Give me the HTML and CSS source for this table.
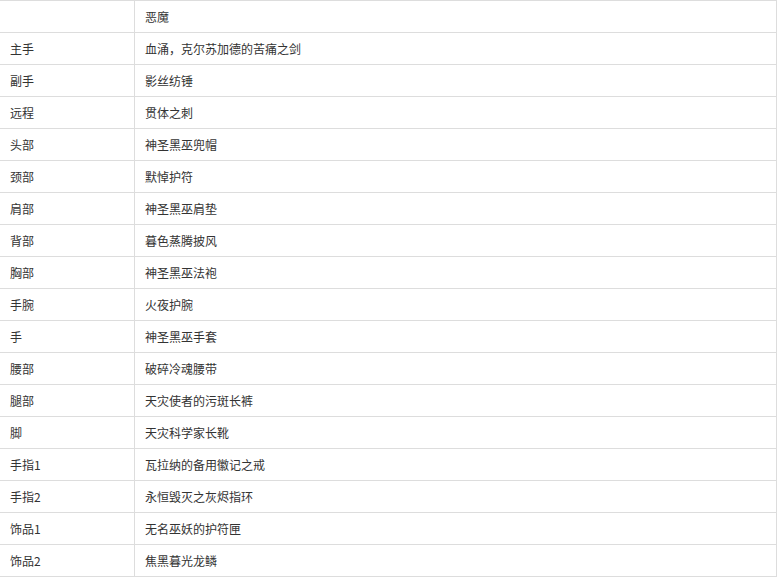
FILE: index.html
```html
<!DOCTYPE html>
<html lang="zh">
<head>
<meta charset="utf-8">
<link rel="stylesheet" href="styles.css">
</head>
<body>
<table class="gear">
<tbody>
<tr><td class="slot"></td><td class="item">恶魔</td></tr>
<tr><td class="slot">主手</td><td class="item">血涌，克尔苏加德的苦痛之剑</td></tr>
<tr><td class="slot">副手</td><td class="item">影丝纺锤</td></tr>
<tr><td class="slot">远程</td><td class="item">贯体之刺</td></tr>
<tr><td class="slot">头部</td><td class="item">神圣黑巫兜帽</td></tr>
<tr><td class="slot">颈部</td><td class="item">默悼护符</td></tr>
<tr><td class="slot">肩部</td><td class="item">神圣黑巫肩垫</td></tr>
<tr><td class="slot">背部</td><td class="item">暮色蒸腾披风</td></tr>
<tr><td class="slot">胸部</td><td class="item">神圣黑巫法袍</td></tr>
<tr><td class="slot">手腕</td><td class="item">火夜护腕</td></tr>
<tr><td class="slot">手</td><td class="item">神圣黑巫手套</td></tr>
<tr><td class="slot">腰部</td><td class="item">破碎冷魂腰带</td></tr>
<tr><td class="slot">腿部</td><td class="item">天灾使者的污斑长裤</td></tr>
<tr><td class="slot">脚</td><td class="item">天灾科学家长靴</td></tr>
<tr><td class="slot">手指1</td><td class="item">瓦拉纳的备用徽记之戒</td></tr>
<tr><td class="slot">手指2</td><td class="item">永恒毁灭之灰烬指环</td></tr>
<tr><td class="slot">饰品1</td><td class="item">无名巫妖的护符匣</td></tr>
<tr><td class="slot">饰品2</td><td class="item">焦黑暮光龙鳞</td></tr>
</tbody>
</table>
</body>
</html>
```

FILE: styles.css
```css
html, body {
  margin: 0;
  padding: 0;
  background: #ffffff;
}

.gear {
  border-collapse: collapse;
  width: 777px;
  table-layout: fixed;
  border-top: 1px solid #dddddd;
  font-family: "Noto Sans CJK SC", "Noto Sans", sans-serif;
  font-size: 12px;
  color: #333333;
}

.gear td {
  height: 31px;
  padding: 0 0 0 10px;
  border-bottom: 1px solid #dddddd;
  border-right: 1px solid #dddddd;
  vertical-align: middle;
  line-height: 16px;
  box-sizing: content-box;
}

.gear .slot {
  width: 124px;
}
```
